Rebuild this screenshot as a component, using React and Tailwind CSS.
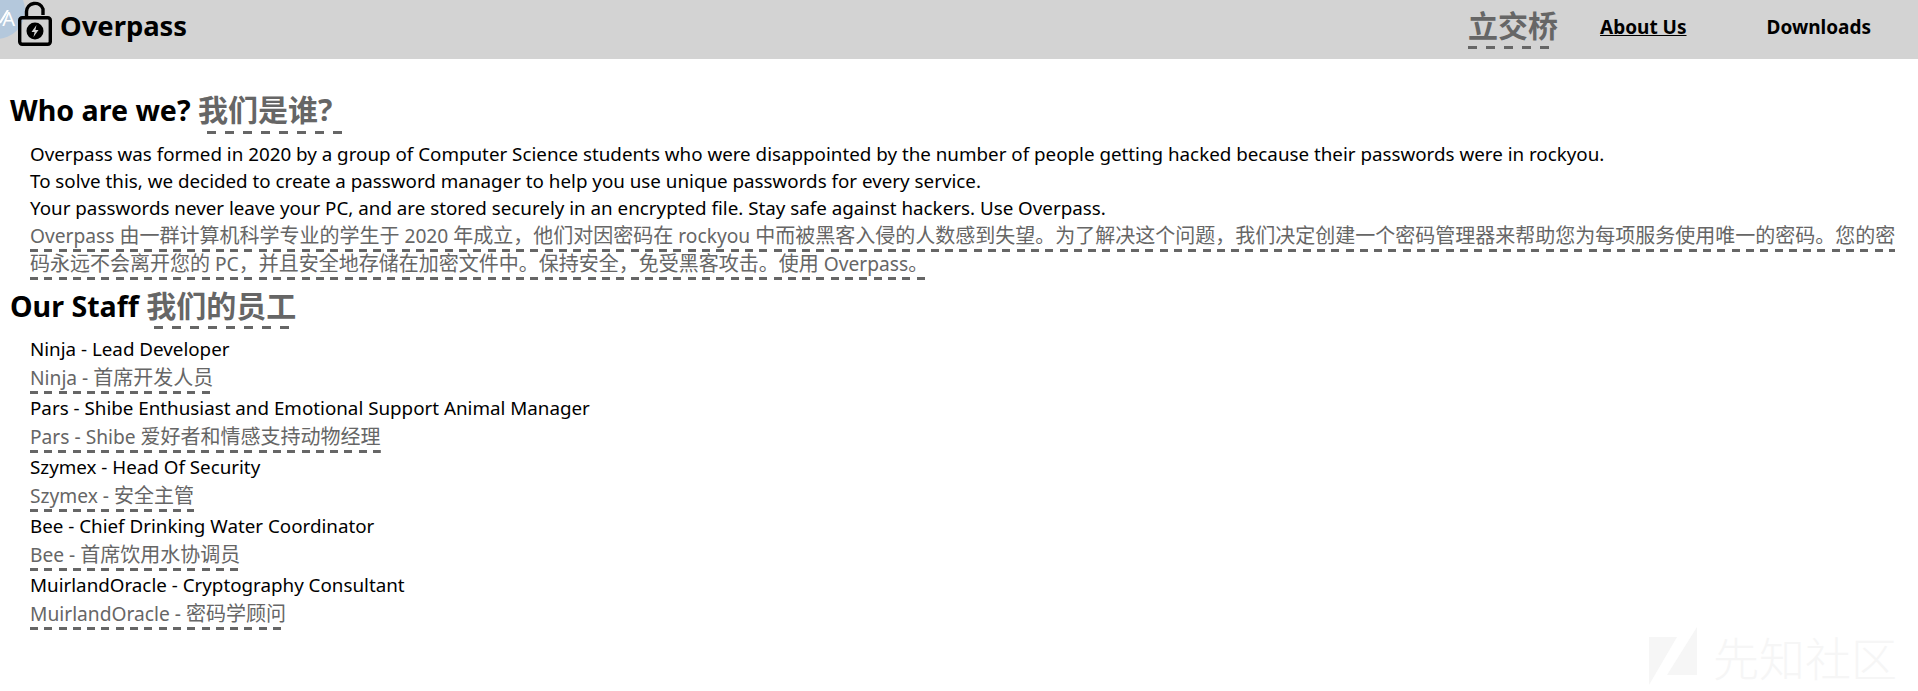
// dashed underline used by all the translated text
const dashes14 = "bg-[repeating-linear-gradient(90deg,#666666_0,#666666_8px,transparent_8px,transparent_14.3px)]";

// latin runs stay at the body size, the CJK runs sit a little larger
const Trans = ({ children }) => (
    <span className={`text-[19.2px] text-[#666666] pb-[3px] bg-no-repeat bg-bottom bg-[length:100%_3px] box-decoration-clone ${dashes14}`}>
        {children.split(/([\u3000-\u9fff\uff00-\uffef]+)/).map((part, i) => (
            i % 2 ? <span key={i} className="text-[20px]">{part}</span> : part
        ))}
    </span>
);

const staff = [
    ['Ninja - Lead Developer', 'Ninja - 首席开发人员'],
    ['Pars - Shibe Enthusiast and Emotional Support Animal Manager', 'Pars - Shibe 爱好者和情感支持动物经理'],
    ['Szymex - Head Of Security', 'Szymex - 安全主管'],
    ['Bee - Chief Drinking Water Coordinator', 'Bee - 首席饮用水协调员'],
    ['MuirlandOracle - Cryptography Consultant', 'MuirlandOracle - 密码学顾问'],
];

const LockIcon = () => (
    <svg width="36" height="46" viewBox="0 0 36 46" className="shrink-0 -mt-[11px]">
        <path d="M9.5 17 V10.5 A8.5 8.5 0 0 1 26 8 V14" fill="none" stroke="#000" strokeWidth="3.4" />
        <rect x="2.7" y="16.7" width="30.6" height="26.6" rx="2.5" fill="none" stroke="#000" strokeWidth="3.4" />
        <circle cx="18" cy="30" r="8.5" fill="#000" />
        <path d="M19.5 24 L14.5 31 H17.6 L16.5 36 L21.5 29 H18.4 Z" fill="#d3d3d3" />
    </svg>
);

export default function App() {
    return (
        <div className="min-h-[691px] bg-white text-black font-['Noto_Sans','Noto_Sans_CJK_SC',sans-serif] relative overflow-hidden">
            <header className="h-[59px] bg-[#d3d3d3] flex items-center justify-between pl-[17px] pr-[47px]">
                <div className="flex items-center gap-[7px] relative z-10">
                    <LockIcon />
                    <span className="text-[27.4px] font-bold -mt-[7px]">Overpass</span>
                </div>
                <nav className="flex items-center text-[19px] font-bold -mt-[5px]">
                    <span className="text-[30px] leading-[40px] mr-[42px] text-[#666666] pb-[3px] bg-no-repeat bg-[position:0_100%] bg-[length:81px_3px] bg-[repeating-linear-gradient(90deg,#666666_0,#666666_9px,transparent_9px,transparent_18px)]">立交桥</span>
                    <a className="underline mr-[80px]">About Us</a>
                    <a>Downloads</a>
                </nav>
            </header>
            {/* translate extension badge peeking in at the corner */}
            <div className="absolute -left-[32px] -top-[18px] w-[57px] h-[57px] rounded-full bg-[#b4c8dc] flex items-end justify-end pr-[10px] pb-[10px] text-white text-[20px] leading-none">A</div>
            <svg width="10" height="14" viewBox="0 0 10 14" className="absolute left-0 top-[10px]"><path d="M8 0 L0 13" stroke="#fff" strokeWidth="2" fill="none" /></svg>

            <main className="pl-[10px] pt-[31px] text-[18.8px] leading-[27px]">
                <h2 className="text-[28.6px] font-bold leading-[40px]">
                    Who are we? <span className="text-[30px] text-[#666666] pr-[10px] pb-[4px] bg-no-repeat bg-[position:9px_100%] bg-[length:135px_3px] bg-[repeating-linear-gradient(90deg,#666666_0,#666666_9px,transparent_9px,transparent_18px)]">我们是谁?</span>
                </h2>
                <div className="pl-[20px] pt-[11px] pr-[16px]">
                    <p>Overpass was formed in 2020 by a group of Computer Science students who were disappointed by the number of people getting hacked because their passwords were in rockyou.</p>
                    <p>To solve this, we decided to create a password manager to help you use unique passwords for every service.</p>
                    <p>Your passwords never leave your PC, and are stored securely in an encrypted file. Stay safe against hackers. Use Overpass.</p>
                    <p><Trans>Overpass 由一群计算机科学专业的学生于 2020 年成立，他们对因密码在 rockyou 中而被黑客入侵的人数感到失望。为了解决这个问题，我们决定创建一个密码管理器来帮助您为每项服务使用唯一的密码。您的密码永远不会离开您的 PC，并且安全地存储在加密文件中。保持安全，免受黑客攻击。使用 Overpass。</Trans></p>
                </div>
                <h2 className="text-[28.6px] font-bold leading-[40px] mt-[8px]">
                    Our Staff <span className="text-[30px] text-[#666666] pb-[3px] bg-no-repeat bg-[position:8px_100%] bg-[length:135px_3px] bg-[repeating-linear-gradient(90deg,#666666_0,#666666_9px,transparent_9px,transparent_18px)]">我们的员工</span>
                </h2>
                <div className="pl-[20px] pt-[9px]">
                    {staff.map(([en, zh]) => (
                        <div key={en}>
                            <p className="h-[28px] leading-[28px]">{en}</p>
                            <p className="h-[31px] leading-[29px]"><Trans>{zh}</Trans></p>
                        </div>
                    ))}
                </div>
            </main>

            <div className="absolute left-[1649px] top-[627px] flex items-center gap-[16px] text-[#f6f6f6]">
                <svg width="48" height="58" viewBox="0 0 48 58"><path d="M0 10 H28 L0 58 Z M48 0 V48 H18 Z" fill="#f6f6f6" /></svg>
                <span className="text-[46px] font-['Noto_Sans_CJK_SC',sans-serif] font-light leading-none">先知社区</span>
            </div>
        </div>
    );
}
